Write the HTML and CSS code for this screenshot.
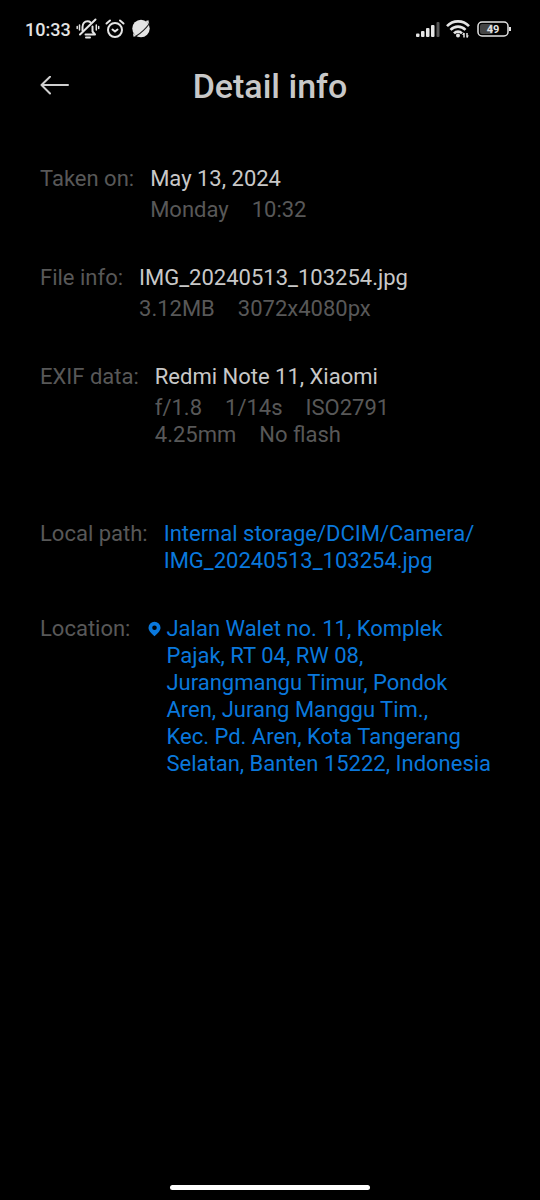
FILE: index.html
```
<!DOCTYPE html>
<html lang="en">
<head>
<meta charset="utf-8">
<meta name="viewport" content="width=device-width, initial-scale=1">
<title>Detail info</title>
<link rel="stylesheet" href="styles.css">
</head>
<body>
<div class="status-bar">
  <div class="status-group">
    <span class="clock">10:33</span>
    <svg class="status-icon" width="24" height="22" viewBox="0 0 24 22" fill="none" stroke="#e4e4e4" stroke-width="2" stroke-linecap="round" stroke-linejoin="round" aria-hidden="true">
      <path d="M6.500 12.500V9C6.500 5.500 8.500 3.300 11.500 3.300c1.300 0 2.400.4 3.200 1.100M16.500 8.500V13.500l2.500 3H9.500"/>
      <path d="M19.500 1.500L4 16.500"/>
      <path d="M10 19.500h4"/>
      <path d="M3.500 7v5M1.200 8.500v2M20.300 7v5M22.700 8.500v2" stroke-width="1.500"/>
    </svg>
    <svg class="status-icon alarm" width="20" height="20" viewBox="0 0 20 20" fill="none" stroke="#e4e4e4" stroke-width="2" stroke-linecap="round" aria-hidden="true">
      <circle cx="10" cy="11" r="7"/>
      <path d="M7.500 10.500l2.500 2 2.500-2M1.500 4.500l3.500-3M18.500 4.500l-3.500-3"/>
    </svg>
    <svg class="status-icon" width="20" height="20" viewBox="0 0 20 20" aria-hidden="true">
      <circle cx="10" cy="9.500" r="8.700" fill="#e4e4e4"/>
      <path d="M14.500 2l3-.8L18 5M5.500 17l-3 .8L2 14" fill="#e4e4e4"/>
      <path d="M4.500 17.500C9.500 14.500 14.500 10 18.500 4.500" stroke="#222" stroke-width="1.200" fill="none"/>
    </svg>
  </div>
  <div class="status-group">
    <svg class="status-icon" width="24" height="18" viewBox="0 0 24 18" aria-hidden="true">
      <g fill="#e4e4e4">
        <rect x="0" y="13.500" width="3.500" height="3.500" rx="1"/>
        <rect x="5" y="11" width="3.500" height="6" rx="1"/>
        <rect x="10" y="8" width="3.500" height="9" rx="1"/>
        <rect x="15" y="5" width="3.500" height="12" rx="1"/>
      </g>
      <rect x="20.500" y="2" width="3" height="15" rx="1" fill="#555"/>
    </svg>
    <svg class="status-icon wifi" width="24" height="20" viewBox="0 0 24 20" fill="none" stroke="#e4e4e4" stroke-width="2.600" aria-hidden="true">
      <path d="M1 7.200C7 .8 17 .8 23 7.200M4.500 10.900c4.300-4.400 10.700-4.400 15 0M8 14.400c2.300-2.400 5.700-2.400 8 0"/>
      <circle cx="12" cy="16.500" r="2" fill="#e4e4e4" stroke="none"/>
      <path d="M18 18.500v-4.500M21 14v4.500" stroke-width="1.500"/>
      <path d="M16 15.800L18 13.300V16zM23 16.500L21 19v-2.500z" fill="#e4e4e4" stroke="none"/>
    </svg>
    <svg class="status-icon" width="35" height="16" viewBox="0 0 35 16" role="img" aria-label="Battery 49 percent">
      <rect x="3" y="3" width="13" height="10" rx="2" fill="#444"/>
      <rect x="1" y="1" width="30" height="14" rx="4" fill="none" stroke="#e4e4e4" stroke-width="1.500"/>
      <path d="M33 6v4" stroke="#e4e4e4" stroke-width="2"/>
      <text class="battery-text" x="16" y="12" text-anchor="middle">49</text>
    </svg>
  </div>
</div>
<header class="app-bar">
  <button class="back" type="button" aria-label="Back">
    <svg width="30" height="20" viewBox="0 0 30 20" fill="none" stroke="#cfcfcf" stroke-width="2" stroke-linecap="round" stroke-linejoin="round" aria-hidden="true"><path d="M28 9H1.500M10 .8L1.500 9l8.500 8.500"/></svg>
  </button>
  <h1 class="title">Detail info</h1>
</header>
<main>
  <dl class="details">
    <div class="row">
      <dt>Taken on:</dt>
      <dd>
        <div class="primary">May 13, 2024</div>
        <div class="secondary"><span>Monday</span><span>10:32</span></div>
      </dd>
    </div>
    <div class="row">
      <dt>File info:</dt>
      <dd>
        <div class="primary">IMG_20240513_103254.jpg</div>
        <div class="secondary"><span>3.12MB</span><span>3072x4080px</span></div>
      </dd>
    </div>
    <div class="row">
      <dt>EXIF data:</dt>
      <dd>
        <div class="primary">Redmi Note 11, Xiaomi</div>
        <div class="secondary"><span>f/1.8</span><span>1/14s</span><span>ISO2791</span></div>
        <div class="secondary"><span>4.25mm</span><span>No flash</span></div>
      </dd>
    </div>
    <div class="row separate">
      <dt>Local path:</dt>
      <dd><a href="#path">Internal storage/DCIM/Camera/<wbr>IMG_20240513_103254.jpg</a></dd>
    </div>
    <div class="row">
      <dt>Location:</dt>
      <dd>
        <a class="place" href="#map">
          <svg class="pin" width="16" height="16" viewBox="0 0 16 16" aria-hidden="true"><path fill="#0a78dc" fill-rule="evenodd" d="M8.500 .8a6 6 0 0 1 6 6c0 3.200-3.200 6-6 8.400C5.700 12.800 2.500 10 2.500 6.800a6 6 0 0 1 6-6zm0 3.700a2.300 2.300 0 1 0 0 4.600 2.300 2.300 0 0 0 0-4.600z"/></svg>
          <span>Jalan Walet no. 11, Komplek<br>Pajak, RT 04, RW 08,<br>Jurangmangu Timur, Pondok<br>Aren, Jurang Manggu Tim.,<br>Kec. Pd. Aren, Kota Tangerang<br>Selatan, Banten 15222, Indonesia</span>
        </a>
      </dd>
    </div>
  </dl>
</main>
<div class="home-indicator"></div>
</body>
</html>
```
FILE: styles.css
```
* {
  box-sizing: border-box;
}

body {
  display: flex;
  flex-direction: column;
  min-height: 100vh;
  margin: 0;
  background: #000;
  color: #c8c8c8;
  font-family: Roboto, "Noto Sans", sans-serif;
  font-size: 22px;
  line-height: 27px;
}

.status-bar {
  display: flex;
  justify-content: space-between;
  align-items: center;
  height: 56px;
  padding: 2px 28px 0 25px;
}

.status-group {
  display: flex;
  align-items: center;
}

.status-icon {
  display: block;
  flex: none;
}

.clock {
  margin-right: 5px;
  color: #e4e4e4;
  font-size: 18px;
  font-weight: 500;
}

.alarm {
  margin: 0 6px 0 5px;
}

.wifi {
  margin: 0 7px 0 6px;
}

.battery-text {
  fill: #e4e4e4;
  font-size: 11px;
  font-weight: 700;
}

.app-bar {
  display: grid;
  grid-template-columns: 30px 1fr 30px;
  align-items: center;
  height: 60px;
  padding: 0 40px;
}

.back {
  display: flex;
  padding: 0;
  border: 0;
  background: none;
  cursor: pointer;
}

.title {
  margin: 0;
  font-size: 34px;
  font-weight: 500;
  line-height: 40px;
  text-align: center;
}

main {
  flex: 1;
  padding: 49px 40px 0;
}

.details {
  display: flex;
  flex-direction: column;
  gap: 41px;
  margin: 0;
}

.row {
  display: flex;
  gap: 16px;
}

.separate {
  margin-top: 31px;
}

dt {
  flex: none;
  color: #585858;
}

dd {
  flex: 1;
  margin: 0;
}

.primary {
  margin-bottom: 4px;
}

.secondary {
  display: flex;
  gap: 23px;
  color: #585858;
}

a {
  color: #0a78dc;
  text-decoration: none;
}

.place {
  display: flex;
  gap: 4px;
  white-space: nowrap;
}

.pin {
  flex: none;
  margin-top: 6px;
}

.home-indicator {
  width: 37%;
  height: 5px;
  margin: 0 auto 10px;
  border-radius: 3px;
  background: #fff;
}
```
